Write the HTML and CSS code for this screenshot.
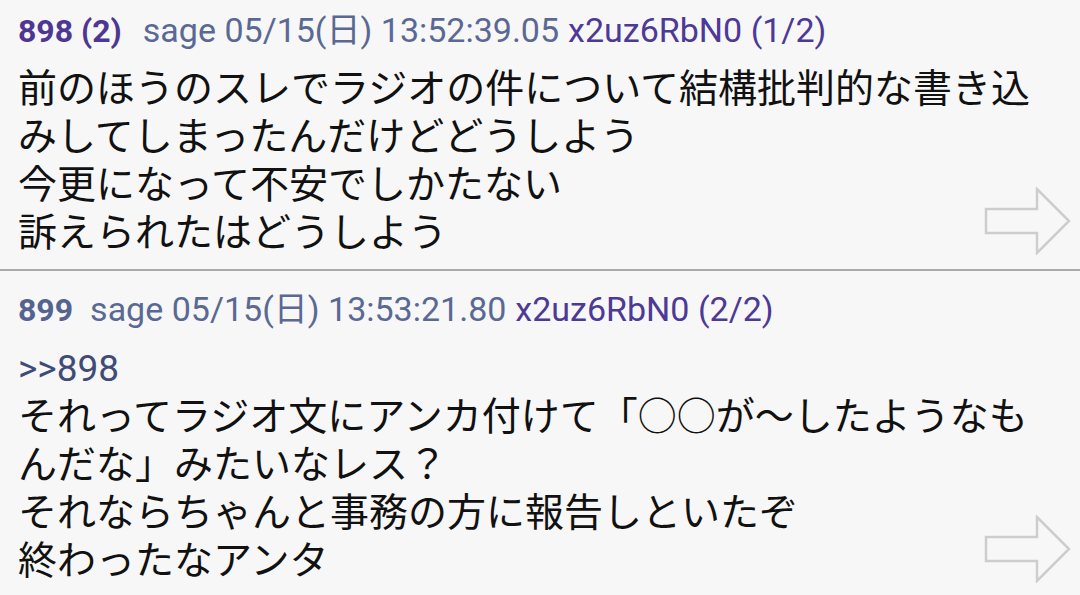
FILE: index.html
```html
<!DOCTYPE html>
<html lang="ja">
<head>
  <meta charset="UTF-8" />
  <title>Thread</title>
  <link rel="stylesheet" href="styles.css">
</head>
<body>
  <div class="thread">

    <!-- Post 898 -->
    <article class="post">
      <div class="head">
        <span class="num">898 (2)</span>
        <span class="meta">sage 05/15(日) 13:52:39.05</span>
        <span class="id">x2uz6RbN0 (1/2)</span>
      </div>
      <div class="body">前のほうのスレでラジオの件について結構批判的な書き込みしてしまったんだけどどうしよう<br>今更になって不安でしかたない<br>訴えられたはどうしよう</div>
      <svg class="arrow" width="88" height="68" viewBox="0 0 88 68">
        <path d="M2 22 H53 V2 L85 34 L53 66 V46 H2 Z" fill="none" stroke="#cdcdcd" stroke-width="2.5" stroke-linejoin="miter"/>
      </svg>
    </article>

    <!-- Post 899 -->
    <article class="post">
      <div class="head">
        <span class="num single">899</span>
        <span class="meta">sage 05/15(日) 13:53:21.80</span>
        <span class="id">x2uz6RbN0 (2/2)</span>
      </div>
      <div class="body"><span class="anchor">&gt;&gt;898</span><br>それってラジオ文にアンカ付けて「○○が〜したようなもんだな」みたいなレス？<br>それならちゃんと事務の方に報告しといたぞ<br>終わったなアンタ</div>
      <svg class="arrow" width="88" height="68" viewBox="0 0 88 68">
        <path d="M2 22 H53 V2 L85 34 L53 66 V46 H2 Z" fill="none" stroke="#cdcdcd" stroke-width="2.5" stroke-linejoin="miter"/>
      </svg>
    </article>

  </div>
</body>
</html>
```

FILE: styles.css
```css
body {
  margin: 0;
  padding: 0;
  background: #f7f7f7;
  font-family: 'Roboto', 'Noto Sans CJK JP', sans-serif;
  overflow: hidden;
}

.thread {
  margin-top: -8px;
}

.post {
  position: relative;
  padding: 18px 30px 12px 18px;
  border-bottom: 2px solid #aaaaaa;
}

.head {
  display: flex;
  align-items: baseline;
  gap: 9px;
  font-size: 34px;
  line-height: 40px;
  white-space: nowrap;
}

.num {
  font-size: 32px;
  font-weight: bold;
  color: #4e3693;
  margin-right: 12px;
}

.num.single {
  color: #55638f;
  margin-right: 8px;
}

.meta {
  color: #5a6994;
}

.id {
  color: #4d3996;
}

.body {
  margin-top: 14px;
  font-size: 39px;
  line-height: 48px;
  color: #111;
}

.anchor {
  color: #3f4c78;
  font-size: 37px;
}

.arrow {
  position: absolute;
  right: 8px;
  bottom: 14px;
}
```
